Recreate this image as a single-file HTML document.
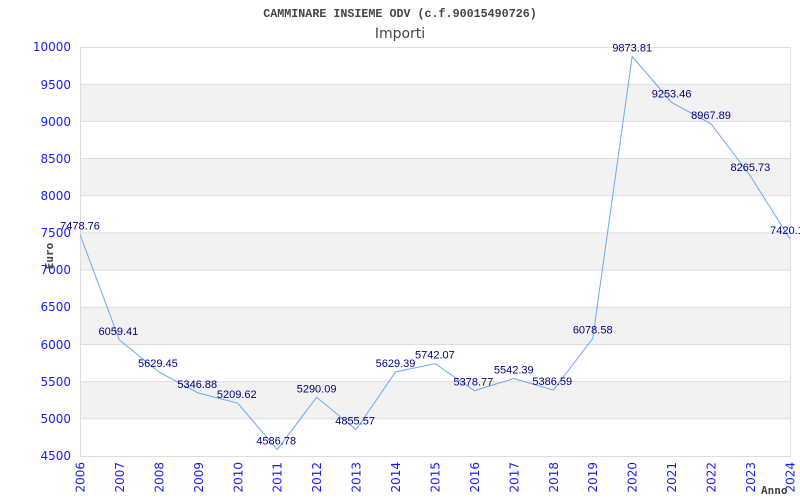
<!DOCTYPE html>
<html><head><meta charset="utf-8"><style>
html,body{margin:0;padding:0;background:#fff;width:800px;height:500px;overflow:hidden}
</style></head><body>
<svg width="800" height="500" xmlns="http://www.w3.org/2000/svg">
<rect width="800" height="500" fill="#fff"/>
<text x="400" y="17" text-anchor="middle" font-family="Liberation Mono, monospace" font-weight="bold" font-size="11.7" fill="#444">CAMMINARE INSIEME ODV (c.f.90015490726)</text>
<text x="400" y="38" text-anchor="middle" font-family="DejaVu Sans, sans-serif" font-size="14" fill="#444">Importi</text>
<g fill="#f2f2f2">
<rect x="80" y="84.2" width="710" height="37.2"/>
<rect x="80" y="158.5" width="710" height="37.2"/>
<rect x="80" y="232.9" width="710" height="37.2"/>
<rect x="80" y="307.3" width="710" height="37.2"/>
<rect x="80" y="381.6" width="710" height="37.2"/>
</g>
<g stroke="#ddd" stroke-width="1">
<line x1="80" x2="790" y1="84.2" y2="84.2"/><line x1="80" x2="790" y1="121.4" y2="121.4"/>
<line x1="80" x2="790" y1="158.5" y2="158.5"/><line x1="80" x2="790" y1="195.7" y2="195.7"/>
<line x1="80" x2="790" y1="232.9" y2="232.9"/><line x1="80" x2="790" y1="270.1" y2="270.1"/>
<line x1="80" x2="790" y1="307.3" y2="307.3"/><line x1="80" x2="790" y1="344.5" y2="344.5"/>
<line x1="80" x2="790" y1="381.6" y2="381.6"/><line x1="80" x2="790" y1="418.8" y2="418.8"/>
</g>
<rect x="80.5" y="47.5" width="710" height="409" fill="none" stroke="#ddd"/>
<g font-family="DejaVu Sans, sans-serif" font-size="12" fill="#1a1aff" text-anchor="end">
<text x="71" y="51">10000</text><text x="71" y="89">9500</text><text x="71" y="126">9000</text>
<text x="71" y="163">8500</text><text x="71" y="200">8000</text><text x="71" y="237">7500</text>
<text x="71" y="274">7000</text><text x="71" y="311">6500</text><text x="71" y="349">6000</text>
<text x="71" y="386">5500</text><text x="71" y="423">5000</text><text x="71" y="460">4500</text>
</g>
<text transform="translate(53,256) rotate(-90)" text-anchor="middle" font-family="DejaVu Sans Mono, monospace" font-weight="bold" font-size="11" fill="#444">Euro</text>
<g font-family="DejaVu Sans, sans-serif" font-size="12" fill="#1a1aff" text-anchor="end">
<text transform="translate(84.5,462) rotate(-90)">2006</text>
<text transform="translate(123.9,462) rotate(-90)">2007</text>
<text transform="translate(163.4,462) rotate(-90)">2008</text>
<text transform="translate(202.8,462) rotate(-90)">2009</text>
<text transform="translate(242.3,462) rotate(-90)">2010</text>
<text transform="translate(281.7,462) rotate(-90)">2011</text>
<text transform="translate(321.1,462) rotate(-90)">2012</text>
<text transform="translate(360.6,462) rotate(-90)">2013</text>
<text transform="translate(400,462) rotate(-90)">2014</text>
<text transform="translate(439.4,462) rotate(-90)">2015</text>
<text transform="translate(478.9,462) rotate(-90)">2016</text>
<text transform="translate(518.3,462) rotate(-90)">2017</text>
<text transform="translate(557.8,462) rotate(-90)">2018</text>
<text transform="translate(597.2,462) rotate(-90)">2019</text>
<text transform="translate(636.7,462) rotate(-90)">2020</text>
<text transform="translate(676.1,462) rotate(-90)">2021</text>
<text transform="translate(715.5,462) rotate(-90)">2022</text>
<text transform="translate(754.9,462) rotate(-90)">2023</text>
<text transform="translate(794.5,462) rotate(-90)">2024</text>
</g>
<text x="761" y="494" font-family="DejaVu Sans Mono, monospace" font-weight="bold" font-size="11" fill="#444">Anno</text>
<polyline fill="none" stroke="#6aa8f0" stroke-width="1" points="80,234.5 119.4,340 158.9,372 198.3,393 237.8,403.2 277.2,449.6 316.6,397.3 356.1,429.6 395.5,372 434.9,363.6 474.4,390.7 513.8,378.5 553.3,390.1 592.7,338.6 632.2,56.4 671.6,102.5 711,123.8 750.4,176 790,238.9"/>
<g font-family="Liberation Sans, sans-serif" font-size="11" fill="#000080" text-anchor="middle">
<text x="80" y="229.5">7478.76</text>
<text x="118.4" y="335">6059.41</text>
<text x="157.9" y="367">5629.45</text>
<text x="197.3" y="388">5346.88</text>
<text x="236.8" y="398.2">5209.62</text>
<text x="276.2" y="444.6">4586.78</text>
<text x="316.6" y="392.3">5290.09</text>
<text x="355.1" y="424.6">4855.57</text>
<text x="395.5" y="367">5629.39</text>
<text x="434.9" y="358.6">5742.07</text>
<text x="473.4" y="385.7">5378.77</text>
<text x="513.8" y="373.5">5542.39</text>
<text x="552.3" y="385.1">5386.59</text>
<text x="592.7" y="333.6">6078.58</text>
<text x="632.2" y="51.4">9873.81</text>
<text x="671.6" y="97.5">9253.46</text>
<text x="711" y="118.8">8967.89</text>
<text x="750.4" y="171">8265.73</text>
<text x="790" y="233.9">7420.10</text>
</g>
</svg>
</body></html>
